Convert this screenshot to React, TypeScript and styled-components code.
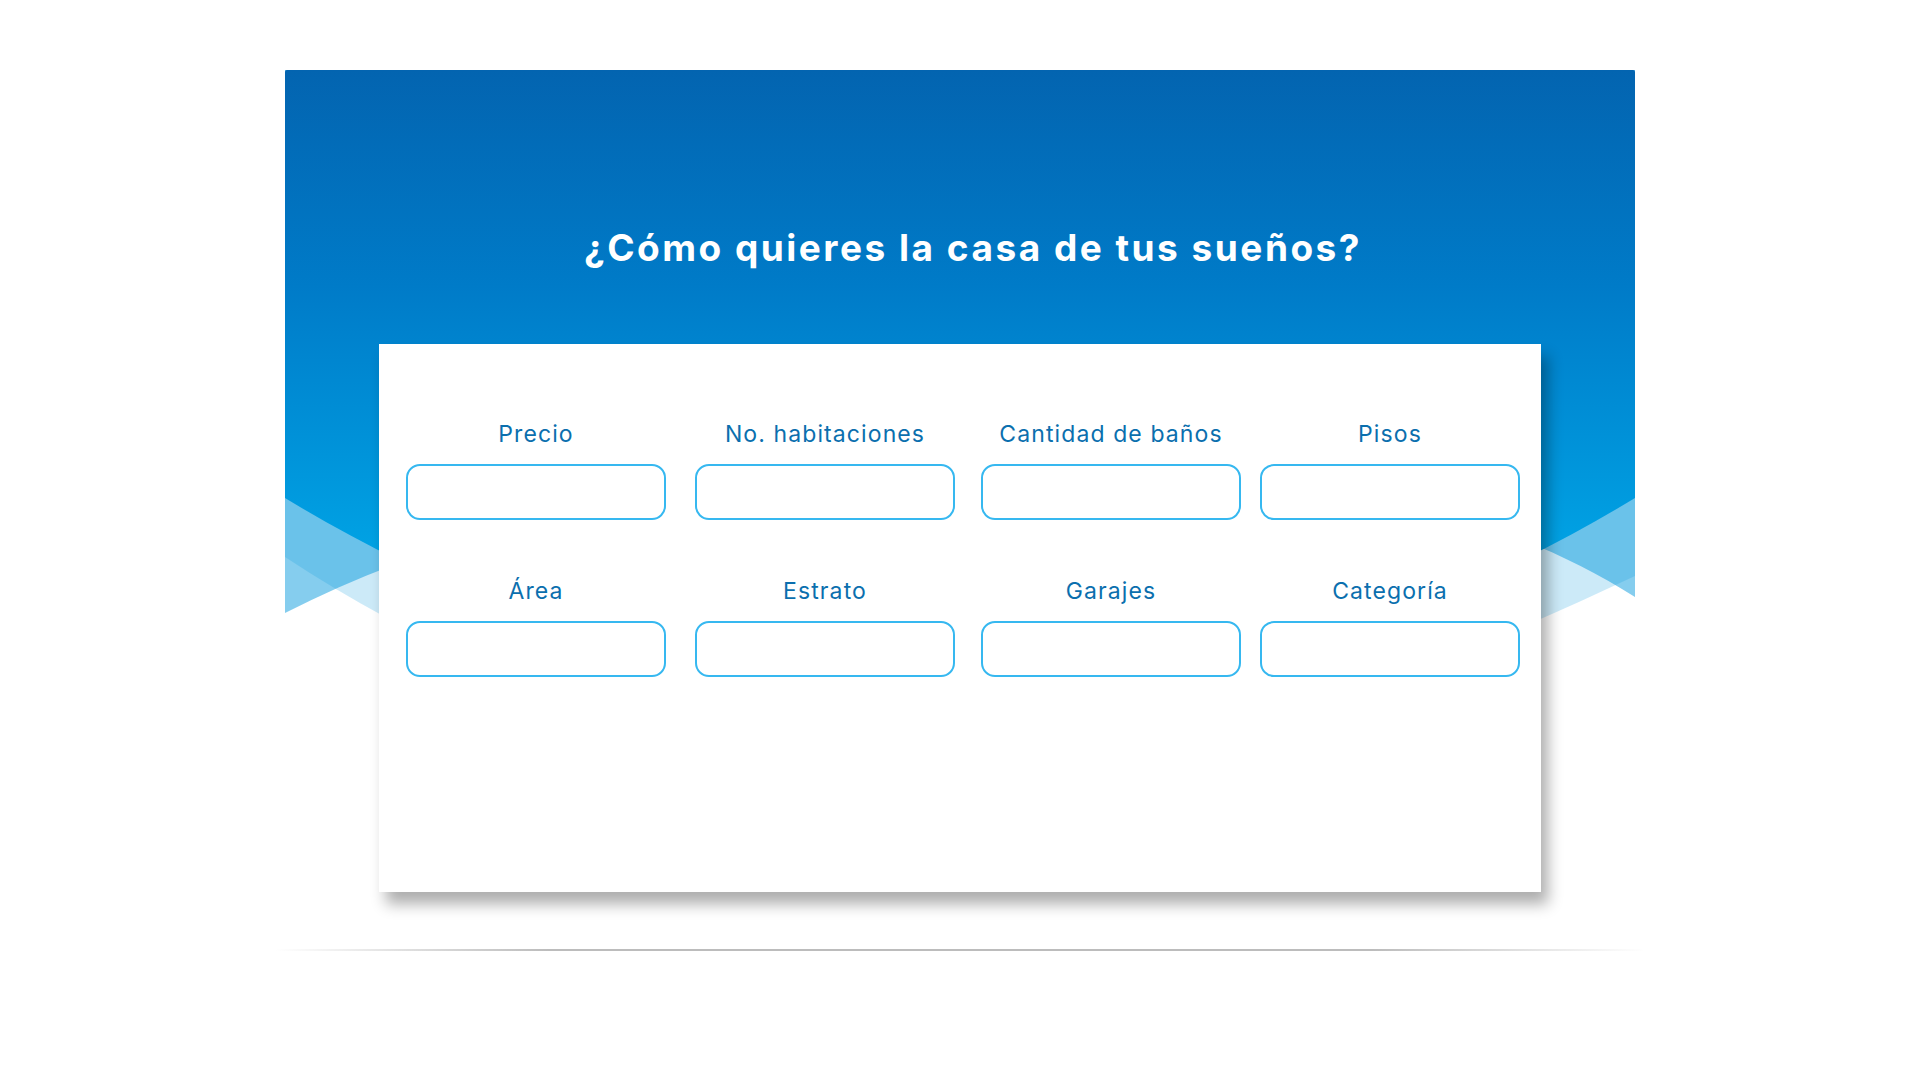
import React from "react";
import styled, {createGlobalStyle} from "styled-components";

const GlobalStyle = createGlobalStyle`
body{
margin: 0;
background: #fff;
font-family: Inter, "Noto Sans", sans-serif;
}
`;

const Stage = styled.div`
position: relative;
width: 1350px;
margin: 70px auto 0;
`;

const Backdrop = styled.svg`
position: absolute;
top: 0;
left: 0;
z-index: 0;
`;

const Title = styled.h1`
position: relative;
z-index: 1;
margin: 0;
padding: 155px 0 0 26px;
line-height: 46px;
text-align: center;
color: #fff;
font-size: 37px;
font-weight: 700;
letter-spacing: 2.5px;
`;

const Card = styled.div`
position: relative;
z-index: 1;
width: 1162px;
height: 548px;
box-sizing: border-box;
margin: 73px auto 0;
padding: 77px 0 0 27px;
background: #fff;
box-shadow: 7px 12px 14px rgba(0, 0, 0, 0.32);
`;

const Fields = styled.div`
display: grid;
grid-template-columns: 289px 286px 279px 260px;
row-gap: 58px;
`;

const Field = styled.label`
width: 260px;
display: flex;
flex-direction: column;
align-items: center;
gap: 16px;
>span{
font-size: 23px;
line-height: 27px;
font-weight: 400;
letter-spacing: 1.1px;
color: #0b6fae;
}
`;

const Input = styled.input`
width: 100%;
height: 56px;
box-sizing: border-box;
border: 2px solid #36b8f0;
border-radius: 14px;
background: #fff;
outline: none;
padding: 0 16px;
font-size: 18px;
font-family: inherit;
color: #0b6fae;
`;

const Floor = styled.div`
height: 2px;
margin: 57px -10px 0;
background: linear-gradient(90deg, rgba(180, 180, 180, 0) 0%, #bcbcbc 20%, #bcbcbc 80%, rgba(180, 180, 180, 0) 100%);
`;

const fields = ["Precio", "No. habitaciones", "Cantidad de baños", "Pisos", "Área", "Estrato", "Garajes", "Categoría"];

function Waves() {
  return (
    <Backdrop width="1350" height="600" viewBox="0 0 1350 600">
      <defs>
        <linearGradient id="sky" gradientUnits="userSpaceOnUse" x1="0" y1="0" x2="0" y2="480">
          <stop offset="0" stopColor="#0364b0"/>
          <stop offset="0.45" stopColor="#007bc8"/>
          <stop offset="1" stopColor="#00a2e4"/>
        </linearGradient>
      </defs>
      {/* pale band, lowest in the middle */}
      <path d="M0,0 L0,487 C200,620 450,700 675,710 C900,700 1150,600 1350,506 L1350,0 Z" fill="#0096dc" fillOpacity="0.2"/>
      {/* light band, highest in the middle */}
      <path d="M0,0 L0,543 C200,440 450,400 675,390 C900,400 1150,400 1350,527 L1350,0 Z" fill="#0096dc" fillOpacity="0.48"/>
      <path d="M2,0 L1348,0 Q1350,0 1350,2 L1350,428 C1150,550 900,630 675,630 C450,630 200,550 0,428 L0,2 Q0,0 2,0 Z" fill="url(#sky)"/>
    </Backdrop>
  );
}

export default function App() {
  return (
    <>
      <GlobalStyle/>
      <Stage>
        <Waves/>
        <Title>¿Cómo quieres la casa de tus sueños?</Title>
        <Card>
          <Fields>
            {fields.map(name => (
              <Field key={name}>
                <span>{name}</span>
                <Input type="text"/>
              </Field>
            ))}
          </Fields>
        </Card>
        <Floor/>
      </Stage>
    </>
  );
}
